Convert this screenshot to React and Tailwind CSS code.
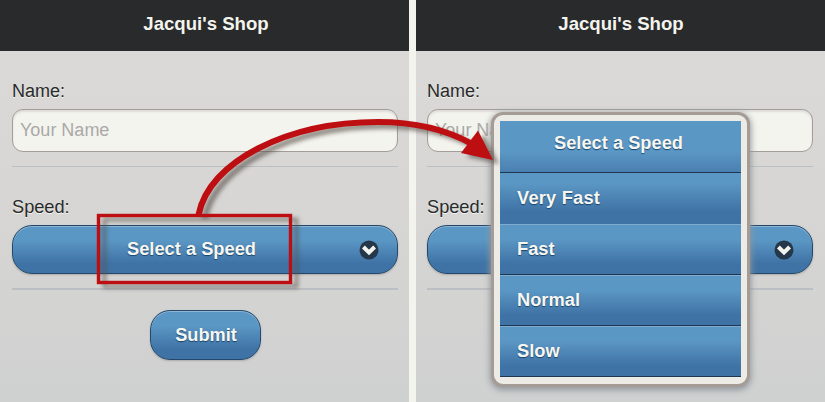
import React from "react";

const BUTTON =
  "border border-[#24486b] bg-linear-to-b from-[#5b97c5] from-30% to-[#3f73a5] to-80% font-bold text-[#f7f7f2] [text-shadow:0_1px_1px_#1c4468]";

function ArrowIcon() {
  return (
    <svg width="20" height="20" viewBox="0 0 20 20" className="mr-[18px] shrink-0">
      <circle cx="10" cy="10" r="9.5" fill="#25384a" />
      <path d="M4.4 7 L10 12.4 L15.600 7" fill="none" stroke="#f4f4ee" strokeWidth="4" />
    </svg>
  );
}

function Phone({ titleClass, children }) {
  return (
    <section className="relative flex h-full w-[409px] shrink-0 flex-col bg-linear-to-b from-[#dbdad8] via-[#d7d6d4] via-50% to-[#cfd0d0]">
      <header className={`flex h-[51px] shrink-0 items-center justify-center bg-[#282a2b] pb-[3px] text-[18.6px] font-bold text-[#f4f4ee] ${titleClass}`}>
        Jacqui's Shop
      </header>
      {children}
    </section>
  );
}

function OrderForm({ className, selected }) {
  return (
    <form className={`flex w-[386px] flex-col text-[18px] text-[#282a2b] ${className}`}>
      <label className="mt-[29px] h-[22px] leading-[22px] [text-shadow:0_1px_0_#f4f4ee]">Name:</label>
      <div className="mt-[7px] flex h-[43px] items-center rounded-[11px] border border-[#a29d98] bg-[#f4f4ee] pb-px pl-[7px] text-[#aaa9a8] shadow-[inset_0_2px_2px_#dddcda]">
        Your Name
      </div>
      <div className="mt-[14px] h-px bg-[#bbbec2]" />
      <label className="mt-[29px] h-[22px] text-[18.2px] leading-[22px] [text-shadow:0_1px_0_#f4f4ee]">Speed:</label>
      <div className={`mt-[7px] flex h-[49px] items-center rounded-[20px] shadow-[inset_0_1px_0_#8eb5d3,0_1px_2px_#aaa] ${BUTTON}`}>
        <span className="flex-1 pb-[2px] pl-[11px] text-center text-[18.3px]">{selected}</span>
        <ArrowIcon />
      </div>
      <div className="mt-[14px] h-[2px] bg-[#bbbec2]" />
      <div className={`mt-[20px] flex h-[50px] w-[111px] items-center justify-center self-center rounded-[20px] pl-[2px] pt-px text-[18.2px] shadow-[inset_0_1px_0_#8eb5d3,0_1px_2px_#aaa] ${BUTTON}`}>
        Submit
      </div>
    </form>
  );
}

function SpeedMenu() {
  return (
    <div className="absolute top-[112px] left-[75px] flex h-[275px] w-[259px] flex-col rounded-[12px] border-[3px] border-[#a59c95] bg-[#ecebe6] px-[6px] pt-[6px] text-[18.3px] font-bold text-[#f7f7f2] shadow-[0_2px_6px_1px_#92989e]">
      <div className="flex h-[52px] items-center justify-center border-b border-[#1d3850] bg-linear-to-b from-[#5b97c5] from-60% to-[#4a80b1] pb-[8px] pr-[4px] [text-shadow:0_1px_1px_#1c4468]">
        Select a Speed
      </div>
      <div className="flex h-[51px] items-center bg-linear-to-b from-[#5b97c5] from-20% to-[#3f73a5] to-75% pb-px pl-[17px] tracking-[0.2px] [text-shadow:0_1px_1px_#1c4468]">
        Very Fast
      </div>
      {["Fast", "Normal", "Slow"].map((speed) => (
        <div
          key={speed}
          className="flex h-[51px] items-center border-b border-[#1d3850] bg-linear-to-b from-[#5b97c5] from-30% to-[#3f73a5] to-80% pl-[17px] shadow-[inset_0_1px_0_#7eabce] [text-shadow:0_1px_1px_#1c4468]"
        >
          {speed}
        </div>
      ))}
    </div>
  );
}

function Annotation() {
  return (
    <svg width="825" height="402" viewBox="0 0 825 402" className="pointer-events-none absolute inset-0">
      <defs>
        <filter id="drop" x="-10%" y="-10%" width="125%" height="130%" colorInterpolationFilters="sRGB">
          <feDropShadow dx="6" dy="4" stdDeviation="2" floodColor="#57504a" floodOpacity="0.65" />
        </filter>
      </defs>
      <g filter="url(#drop)">
        <rect x="98.5" y="215.5" width="192" height="67" fill="none" stroke="#bd0e12" strokeWidth="3.4" />
        <path d="M198.500 215 C209 161 288 122 378 122 C415 122 447 130 472 144" fill="none" stroke="#bd0e12" strokeWidth="6.2" />
        <path d="M478 130.500 L493 160 L461 153 Z" fill="#bd0e12" />
      </g>
    </svg>
  );
}

export default function App() {
  return (
    <main className="relative flex h-[402px] w-[825px] justify-between overflow-hidden bg-[#f4f4ee] font-['Liberation_Sans',Arial,sans-serif]">
      <Phone titleClass="pl-[3px]">
        <OrderForm className="ml-[12px]" selected="Select a Speed" />
      </Phone>
      <Phone titleClass="pl-px">
        <OrderForm className="ml-[11px]" selected="" />
        <SpeedMenu />
      </Phone>
      <Annotation />
    </main>
  );
}
